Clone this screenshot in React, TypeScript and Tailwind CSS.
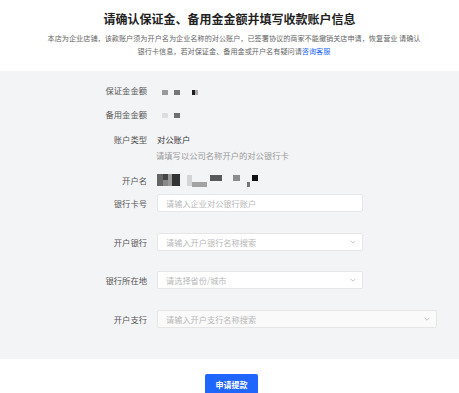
import React from "react";

const font = { fontFamily: '"Noto Sans CJK SC", "Noto Sans", sans-serif' };

function Chevron() {
  return (
    <svg width="6" height="4" viewBox="0 0 6 4" className="shrink-0">
      <path d="M0.6 0.8 L3 3.2 L5.4 0.8" fill="none" stroke="#b5b5b5" strokeWidth="0.8" />
    </svg>
  );
}

function Label({ children }: { children: React.ReactNode }) {
  return <div className="w-[147px] shrink-0 text-right text-[8.3px] leading-[12px] text-[#555]">{children}</div>;
}

function InputBox({ placeholder, select, wide }: { placeholder: string; select?: boolean; wide?: boolean }) {
  return (
    <div
      className={`ml-[10px] flex h-[18px] items-center justify-between rounded-[2px] border border-[#e6e6e6] pl-[8px] pr-[6px] ${
        wide ? "w-[280px] bg-[#fafafa]" : "w-[206px] bg-white"
      }`}
    >
      <span className="text-[8.2px] leading-[12px] text-[#b8b8b8]">{placeholder}</span>
      {select && <Chevron />}
    </div>
  );
}

export default function App() {
  return (
    <div className="w-[459px] h-[393px] overflow-hidden bg-white" style={font}>
      <div className="pt-[12px] text-center">
        <div className="text-[12px] font-bold leading-[14px] text-[#222]">请确认保证金、备用金金额并填写收款账户信息</div>
        <div className="mt-[6px] pl-[9px] text-[7.15px] leading-[13px] text-[#666]">
          本店为企业店铺，该款账户须为开户名为企业名称的对公账户，已签署协议的商家不能撤销关店申请，恢复营业 请确认
          <br />
          银行卡信息，若对保证金、备用金或开户名有疑问请<span className="text-[#1a66ff]">咨询客服</span>
        </div>
      </div>

      <div className="mt-[13px] h-[288px] bg-[#f3f4f6] pt-[13px]">
        <div className="flex h-[12px] items-center">
          <Label>保证金金额</Label>
          <svg width="60" height="12" viewBox="0 0 60 12" className="ml-[15px]">
            <rect x="0" y="6" width="6" height="5" fill="#9a9a9a" />
            <rect x="12" y="6" width="6" height="5" fill="#777" />
            <rect x="30" y="6" width="3" height="5" fill="#1e1e1e" />
            <rect x="33" y="6" width="3" height="5" fill="#aaa" />
          </svg>
        </div>
        <div className="mt-[12px] flex h-[12px] items-center">
          <Label>备用金金额</Label>
          <svg width="60" height="12" viewBox="0 0 60 12" className="ml-[15px]">
            <rect x="0" y="5" width="6" height="5" fill="#dedede" />
            <rect x="12" y="5" width="6" height="5" fill="#6f6f6f" />
          </svg>
        </div>
        <div className="mt-[13px] flex h-[12px] items-center">
          <Label>账户类型</Label>
          <div className="ml-[10px] text-[8.3px] leading-[12px] text-[#333]">对公账户</div>
        </div>
        <div className="mt-[4px] flex h-[12px] items-center">
          <div className="w-[147px] shrink-0" />
          <div className="ml-[9px] text-[8.3px] leading-[12px] text-[#999]">请填写以公司名称开户的对公银行卡</div>
        </div>
        <div className="mt-[13px] flex h-[12px] items-center">
          <Label>开户名</Label>
          <svg width="110" height="14" viewBox="0 0 110 14" className="ml-[10px]">
            <rect x="0" y="1" width="6" height="12" fill="#666" />
            <rect x="6" y="1" width="5" height="6" fill="#444" />
            <rect x="6" y="7" width="5" height="6" fill="#888" />
            <rect x="11" y="1" width="4" height="12" fill="#999" />
            <rect x="15" y="1" width="8" height="12" fill="#333" />
            <rect x="30" y="2" width="5" height="11" fill="#d4d4d4" />
            <rect x="35" y="9" width="15" height="5" fill="#a3a3a3" />
            <rect x="53" y="2" width="12" height="6" fill="#595959" />
            <rect x="76" y="2" width="7" height="6" fill="#8c8c8c" />
            <rect x="90" y="9" width="3" height="5" fill="#777" />
            <rect x="95" y="2" width="6" height="6" fill="#111" />
          </svg>
        </div>
        <div className="mt-[8px] flex h-[18px] items-center">
          <Label>银行卡号</Label>
          <InputBox placeholder="请输入企业对公银行账户" />
        </div>
        <div className="mt-[21px] flex h-[18px] items-center">
          <Label>开户银行</Label>
          <InputBox placeholder="请输入开户银行名称搜索" select />
        </div>
        <div className="mt-[20px] flex h-[18px] items-center">
          <Label>银行所在地</Label>
          <InputBox placeholder="请选择省份/城市" select />
        </div>
        <div className="mt-[21px] flex h-[18px] items-center">
          <Label>开户支行</Label>
          <InputBox placeholder="请输入开户支行名称搜索" select wide />
        </div>
      </div>

      <div className="mt-[15px] flex justify-center">
        <button className="ml-[4px] h-[22px] w-[53px] rounded-[2px] bg-[#1f66ff] text-[8px] font-bold leading-[16px] text-white">
          申请提款
        </button>
      </div>
    </div>
  );
}
